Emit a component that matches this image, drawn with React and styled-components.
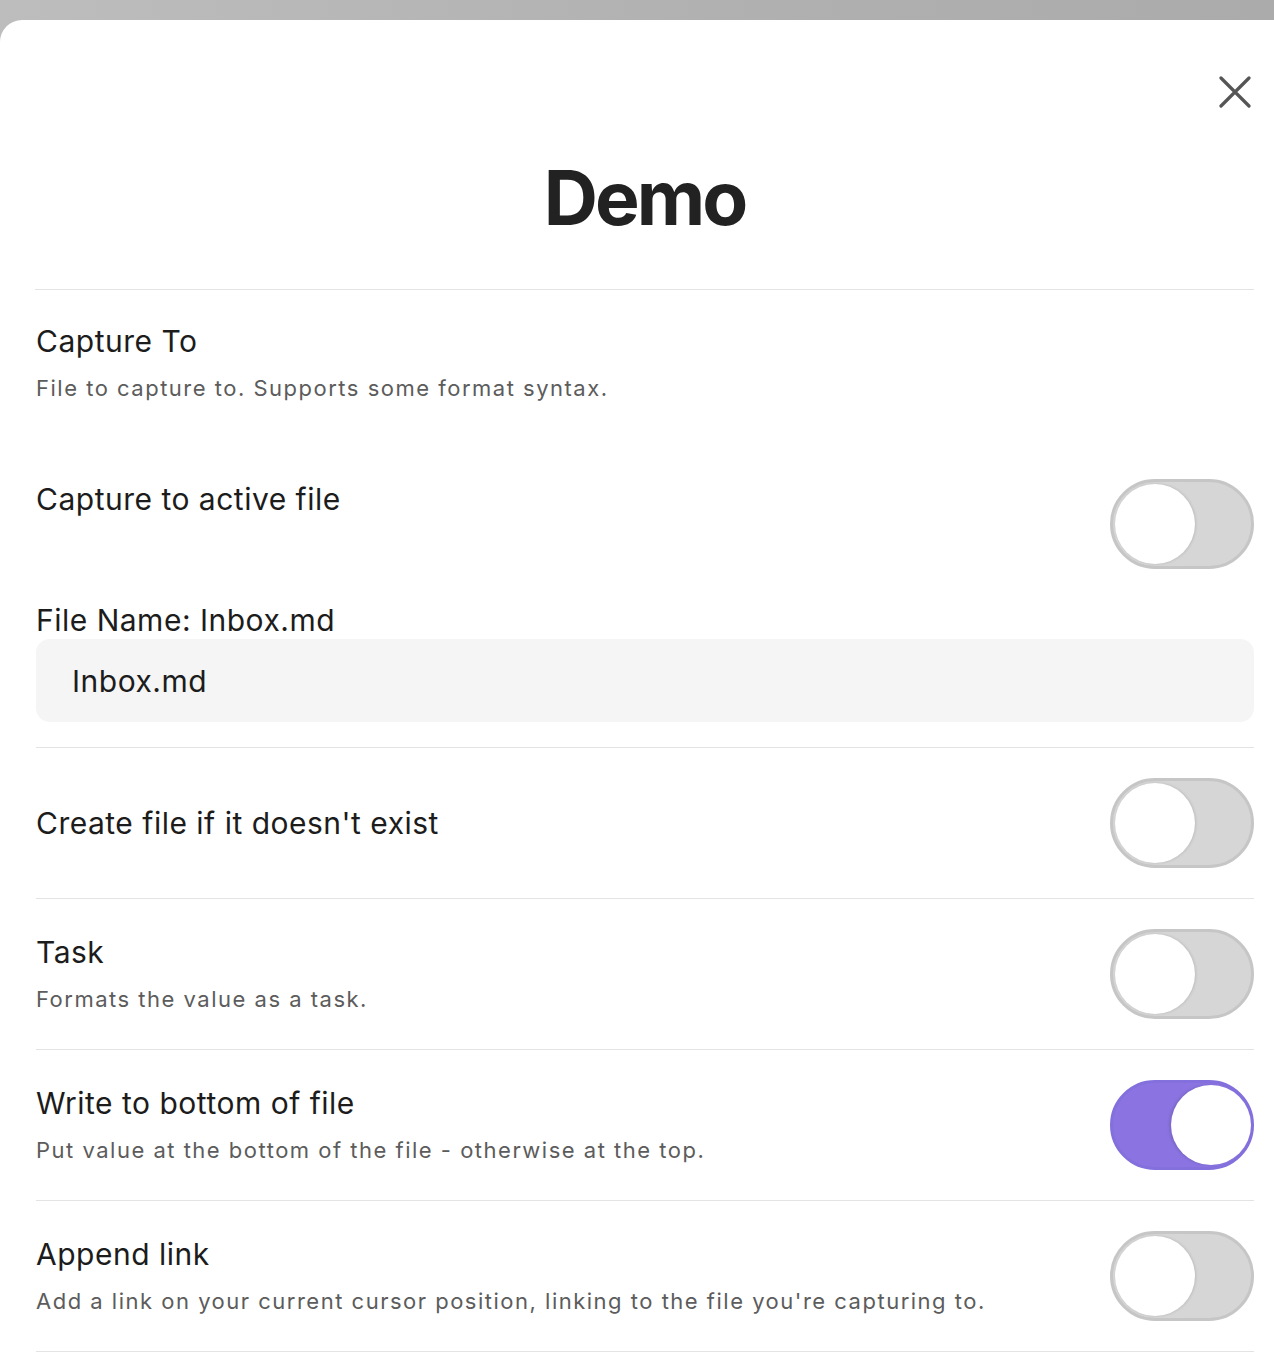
import React, { useState } from "react";
import styled, { createGlobalStyle } from "styled-components";

const GlobalStyle = createGlobalStyle`
  html, body {
    margin: 0;
    padding: 0;
    background: #ffffff;
  }
  body {
    font-family: Inter, "Noto Sans", "Liberation Sans", sans-serif;
    -webkit-font-smoothing: antialiased;
  }
`;

const Screen = styled.div`
  min-height: 1357px;
  padding-top: 20px;
  box-sizing: border-box;
  background: linear-gradient(90deg, #bdbdbd 0%, #b0b0b0 60%, #ababab 100%);
  display: flex;
  flex-direction: column;
`;

const Sheet = styled.div`
  flex: 1;
  position: relative;
  background: #fff;
  border-top-left-radius: 22px;
  padding: 0 20px 0 36px;
  display: flex;
  flex-direction: column;
`;

const Header = styled.header`
  height: 270px;
  box-sizing: border-box;
  padding-top: 140px;
  display: flex;
  align-items: flex-start;
  justify-content: center;
  border-bottom: 1px solid #e3e3e3;
  margin-left: -1px;
`;

const Title = styled.h1`
  margin: 0;
  font-size: 75px;
  line-height: 1;
  font-weight: 700;
  letter-spacing: -2.9px;
  color: #222;
`;

const CloseButton = styled.button`
  position: absolute;
  top: 55px;
  right: 22px;
  width: 34px;
  height: 34px;
  padding: 0;
  border: none;
  background: none;
  display: flex;
  align-items: center;
  justify-content: center;
  cursor: pointer;
`;

const Block = styled.div`
  padding-top: ${(p) => p.$top || 0}px;
`;

const Row = styled.div`
  display: flex;
  align-items: ${(p) => (p.$top ? "flex-start" : "center")};
  justify-content: space-between;
  padding: 30px 0;
  border-bottom: ${(p) => (p.$plain ? "none" : "1px solid #e3e3e3")};
`;

const Info = styled.div`
  display: flex;
  flex-direction: column;
  gap: 15px;
  padding-top: ${(p) => p.$shift || 0}px;
`;

const Name = styled.div`
  font-size: 30px;
  line-height: 34px;
  font-weight: 400;
  color: #1c1c1c;
  letter-spacing: 0.5px;
`;

const Desc = styled.div`
  font-size: 22px;
  line-height: 30px;
  color: #5c5c5c;
  letter-spacing: 1.5px;
`;

const Track = styled.button`
  flex: none;
  width: 144px;
  height: 90px;
  border-radius: 45px;
  padding: 0;
  position: relative;
  cursor: pointer;
  box-sizing: border-box;
  border: 3px solid ${(p) => (p.$on ? "#8370dc" : "#c6c6c6")};
  background: ${(p) => (p.$on ? "#8b74e2" : "#d6d6d6")};
`;

const Knob = styled.span`
  position: absolute;
  top: 2px;
  left: ${(p) => (p.$on ? "58px" : "2px")};
  width: 80px;
  height: 80px;
  border-radius: 50%;
  background: #fff;
  box-shadow: ${(p) => (p.$on ? "-2px 0 3px rgba(0,0,0,0.12)" : "1px 0 3px rgba(0,0,0,0.12)")};
  transition: left 0.15s;
`;

const FieldLabel = styled.div`
  font-size: 30px;
  line-height: 34px;
  font-weight: 400;
  color: #1c1c1c;
  letter-spacing: 0.5px;
  padding-top: 34px;
`;

const TextInput = styled.input`
  display: block;
  width: 100%;
  height: 83px;
  margin: 2px 0 25px;
  box-sizing: border-box;
  border: none;
  border-radius: 14px;
  background: #f5f5f5;
  padding: 0 36px;
  font-family: inherit;
  font-size: 30px;
  color: #1c1c1c;
  letter-spacing: 0.5px;
  outline: none;
`;

const Divider = styled.div`
  border-bottom: 1px solid #e3e3e3;
`;

function Toggle({ on, onChange }) {
  return (
    <Track $on={on} onClick={() => onChange(!on)}>
      <Knob $on={on} />
    </Track>
  );
}

export default function App() {
  const [active, setActive] = useState(false);
  const [create, setCreate] = useState(false);
  const [task, setTask] = useState(false);
  const [bottom, setBottom] = useState(true);
  const [link, setLink] = useState(false);

  return (
    <>
      <GlobalStyle />
      <Screen>
        <Sheet>
          <CloseButton aria-label="Close">
            <svg width="32" height="32" viewBox="0 0 32 32">
              <path d="M2 2 L30 30 M30 2 L2 30" stroke="#555" strokeWidth="3.2" strokeLinecap="round" />
            </svg>
          </CloseButton>
          <Header>
            <Title>Demo</Title>
          </Header>

          <Block $top={34}>
            <Info>
              <Name>Capture To</Name>
              <Desc>File to capture to. Supports some format syntax.</Desc>
            </Info>
          </Block>

          <Row $top $plain style={{ paddingTop: 76, paddingBottom: 0 }}>
            <Info $shift={3}>
              <Name>Capture to active file</Name>
            </Info>
            <Toggle on={active} onChange={setActive} />
          </Row>

          <FieldLabel>File Name: Inbox.md</FieldLabel>
          <TextInput defaultValue="Inbox.md" />
          <Divider />

          <Row>
            <Info>
              <Name>Create file if it doesn't exist</Name>
            </Info>
            <Toggle on={create} onChange={setCreate} />
          </Row>

          <Row>
            <Info>
              <Name>Task</Name>
              <Desc>Formats the value as a task.</Desc>
            </Info>
            <Toggle on={task} onChange={setTask} />
          </Row>

          <Row>
            <Info>
              <Name>Write to bottom of file</Name>
              <Desc>Put value at the bottom of the file - otherwise at the top.</Desc>
            </Info>
            <Toggle on={bottom} onChange={setBottom} />
          </Row>

          <Row>
            <Info>
              <Name>Append link</Name>
              <Desc>Add a link on your current cursor position, linking to the file you're capturing to.</Desc>
            </Info>
            <Toggle on={link} onChange={setLink} />
          </Row>
        </Sheet>
      </Screen>
    </>
  );
}
